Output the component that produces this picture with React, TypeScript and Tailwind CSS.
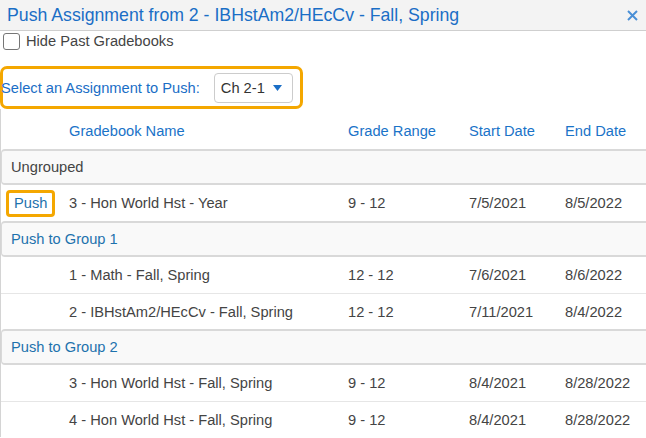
import React from "react";

const cols = "grid grid-cols-[60px_279px_121px_96px_1fr]";

type Row = { name: string; grade: string; start: string; end: string; push?: boolean };

const groups: { title: string; link: boolean; rows: Row[] }[] = [
  {
    title: "Ungrouped",
    link: false,
    rows: [{ name: "3 - Hon World Hst - Year", grade: "9 - 12", start: "7/5/2021", end: "8/5/2022", push: true }],
  },
  {
    title: "Push to Group 1",
    link: true,
    rows: [
      { name: "1 - Math - Fall, Spring", grade: "12 - 12", start: "7/6/2021", end: "8/6/2022" },
      { name: "2 - IBHstAm2/HEcCv - Fall, Spring", grade: "12 - 12", start: "7/11/2021", end: "8/4/2022" },
    ],
  },
  {
    title: "Push to Group 2",
    link: true,
    rows: [
      { name: "3 - Hon World Hst - Fall, Spring", grade: "9 - 12", start: "8/4/2021", end: "8/28/2022" },
      { name: "4 - Hon World Hst - Fall, Spring", grade: "9 - 12", start: "8/4/2021", end: "8/28/2022" },
    ],
  },
];

export default function App() {
  return (
    <div className="w-[646px] h-[438px] overflow-hidden bg-white font-['Liberation_Sans',Arial,sans-serif] text-[14.67px] text-[#444]">
      {/* ── Dialog header ── */}
      <div className="h-[31px] flex items-center justify-between pl-[7px] pr-[8px] bg-[#f3f3f3] border-b border-[#cfcfcf]">
        <span className="text-[17.7px] text-[#1a6ec6]">Push Assignment from 2 - IBHstAm2/HEcCv - Fall, Spring</span>
        <svg width="11" height="11" viewBox="0 0 11 11">
          <path d="M1 1l9 9M10 1l-9 9" stroke="#4a8fd6" strokeWidth="2" />
        </svg>
      </div>

      {/* ── Hide past ── */}
      <label className="flex items-center gap-[6px] pl-[3px] h-[20px]">
        <span className="w-[17px] h-[17px] rounded-[3px] border border-[#767676] bg-white" />
        <span className="text-[#444]">Hide Past Gradebooks</span>
      </label>

      {/* ── Assignment select ── */}
      <div className="mt-[15px] w-[303px] h-[43px] flex items-center border-[3px] border-[#f4a700] rounded-[7px]">
        <span className="text-[#1a6ec6] -ml-[2px]">Select an Assignment to Push:</span>
        <div className="ml-[14px] w-[79px] h-[30px] flex items-center justify-between pl-[6px] pr-[10px] border border-[#cccccc] rounded-[4px]">
          <span className="text-[#333]">Ch 2-1</span>
          <svg width="9" height="6" viewBox="0 0 9 6">
            <path d="M0 0h9L4.5 6z" fill="#1a6ec6" />
          </svg>
        </div>
      </div>

      {/* ── Gradebook table ── */}
      <div className="border-l border-[#d4d4d4]">
        <div className={`${cols} h-[40px] items-center text-[#1a73c8] pt-[4px]`}>
          <span />
          <span className="pl-[8px]">Gradebook Name</span>
          <span className="pl-[8px]">Grade Range</span>
          <span className="pl-[8px]">Start Date</span>
          <span className="pl-[8px]">End Date</span>
        </div>

        {groups.map((g) => (
          <div key={g.title}>
            <div
              className={`h-[36px] flex items-center pl-[9px] bg-[#f9f9f9] border-y-2 border-l border-[#d9d9d9] rounded-l-[4px] ${
                g.link ? "text-[#1d72ad]" : "text-[#444]"
              }`}
            >
              {g.title}
            </div>
            {g.rows.map((r, i) => (
              <div
                key={r.name}
                className={`${cols} h-[36px] items-center ${i > 0 ? "border-t border-[#e6e6e6]" : ""}`}
              >
                <div className="pl-[5px]">
                  {r.push && (
                    <span className="inline-flex items-center h-[27px] px-[5px] border-[3px] border-[#f4a700] rounded-[4px] text-[#1d72ad]">
                      Push
                    </span>
                  )}
                </div>
                <span className="pl-[8px]">{r.name}</span>
                <span className="pl-[8px]">{r.grade}</span>
                <span className="pl-[8px]">{r.start}</span>
                <span className="pl-[8px]">{r.end}</span>
              </div>
            ))}
          </div>
        ))}
      </div>
    </div>
  );
}
